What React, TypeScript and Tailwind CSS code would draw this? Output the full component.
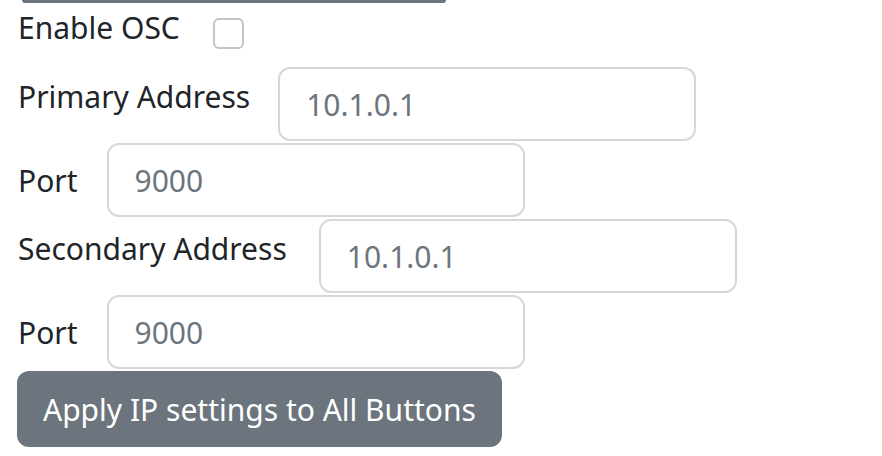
import React, { useState } from 'react'

const Field = ({ label, value, gap, top }: { label: string; value: string; gap: string; top: string }) => {
  return (
    <div className="flex items-start mb-[2px]">
      <label className={`leading-[45px] ${top} ${gap}`}>{label}</label>
      <input
        type="text"
        defaultValue={value}
        className="h-[74px] w-[418px] rounded-[12px] border-2 border-[#d4d7db] bg-white px-[26px] text-[30px] text-[#6c757d] outline-none"
      />
    </div>
  )
}

const App = () => {
  const [osc, setOsc] = useState(false)

  return (
    <div className="min-h-screen bg-white pl-[18px] text-[30px] text-[#212529] font-['Noto_Sans',sans-serif]">
      <div className="ml-[4px] h-[3px] w-[424px] rounded-b-[4px] bg-[#6c757d]"></div>

      <div className="flex items-start h-[64px]">
        <span className="leading-[45px] mt-[2px]">Enable OSC</span>
        <input
          type="checkbox"
          checked={osc}
          onChange={() => setOsc(!osc)}
          className="ml-[33px] mt-[15px] h-[31px] w-[31px] appearance-none rounded-[6px] border-2 border-[#c4c4c4] bg-white"
        />
      </div>

      <Field label="Primary Address" value="10.1.0.1" gap="mr-[28px]" top="mt-[7px]" />
      <Field label="Port" value="9000" gap="mr-[29px]" top="mt-[15px]" />
      <Field label="Secondary Address" value="10.1.0.1" gap="mr-[32px]" top="mt-[7px]" />
      <Field label="Port" value="9000" gap="mr-[29px]" top="mt-[15px]" />

      <button className="-ml-[1px] h-[76px] rounded-[12px] bg-[#6c757d] px-[26px] text-[30px] text-white">
        Apply IP settings to All Buttons
      </button>
    </div>
  )
}

export default App
